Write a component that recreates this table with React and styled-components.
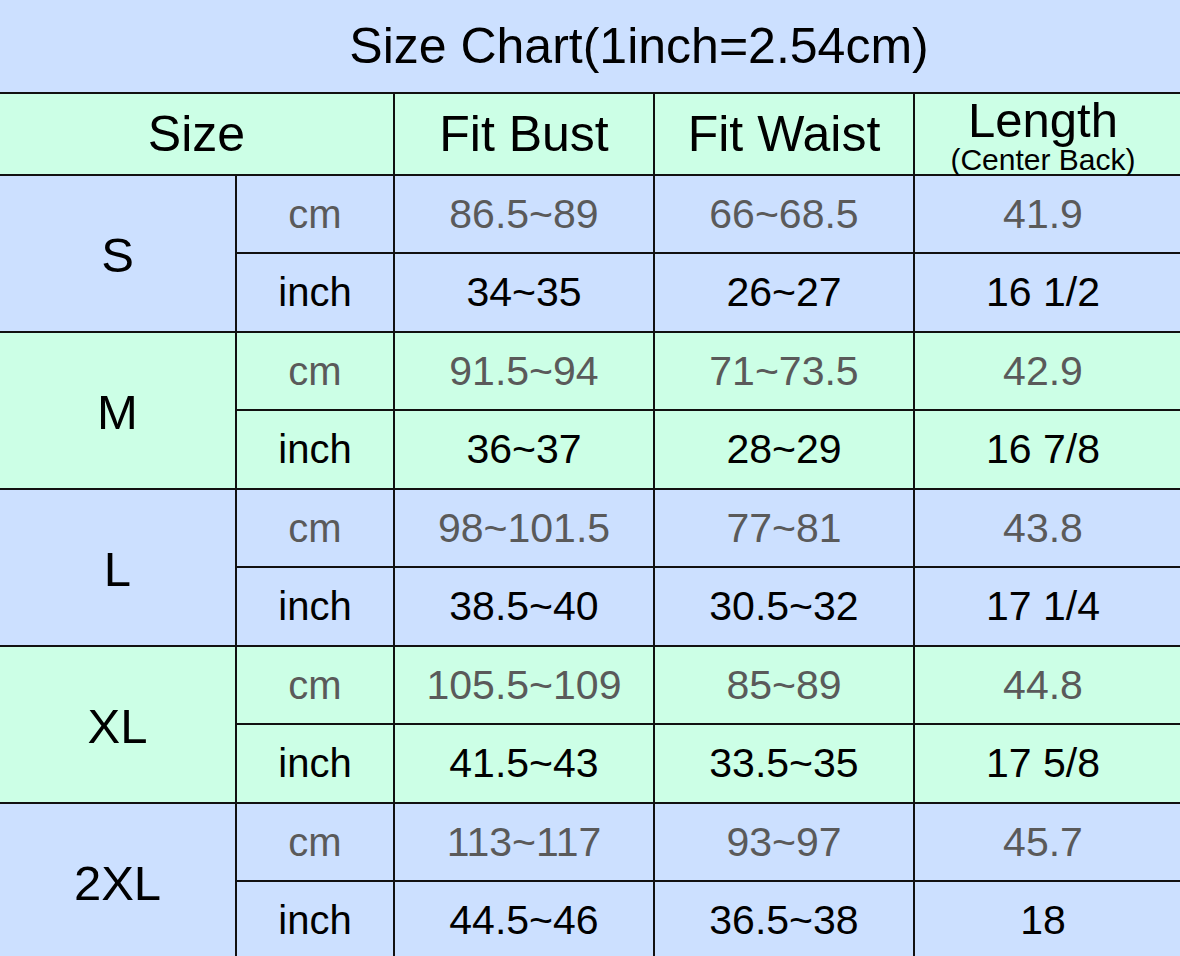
import React from 'react'
import styled, { createGlobalStyle } from 'styled-components'

const GlobalStyle = createGlobalStyle`
  html, body {
    margin: 0;
    padding: 0;
    overflow: hidden;
    background: #cce0ff;
  }
  body {
    font-family: "Liberation Sans", Arial, sans-serif;
  }
`

const colors = {
  blue: '#cce0ff',
  green: '#ccffe6',
  line: '#111111',
  gray: '#5a5a5a',
  ink: '#000000',
}

const Page = styled.div`
  width: 1180px;
  background: ${colors.blue};
`

const Title = styled.div`
  height: 92px;
  display: flex;
  align-items: center;
  justify-content: center;
  padding-left: 98px;
  font-size: 50px;
  color: ${colors.ink};
`

const Table = styled.div`
  display: grid;
  grid-template-columns: 235px 156px 258px 258px 1fr;
  grid-template-rows: 80px repeat(5, 76px 77px);
  gap: 2px;
  background: ${colors.line};
  border-top: 2px solid ${colors.line};
`

const Cell = styled.div`
  display: flex;
  align-items: center;
  justify-content: center;
  background: ${p => p.$bg};
  color: ${p => (p.$muted ? colors.gray : colors.ink)};
  font-size: ${p => p.$fs || 41}px;
  padding-right: ${p => (p.$last ? 9 : 0)}px;
  white-space: nowrap;
`

const HeadCell = styled(Cell)`
  font-size: 50px;
  grid-column: ${p => (p.$wide ? 'span 2' : 'auto')};
`

const StackHead = styled(HeadCell)`
  flex-direction: column;
  line-height: 1;
  padding-top: 2px;

  span {
    font-size: 49px;
  }

  small {
    font-size: 30px;
  }
`

const SizeLabel = styled(Cell)`
  grid-row: span 2;
  font-size: 49px;
  padding-top: 2px;
`

const rows = [
  { size: 'S', cm: ['86.5~89', '66~68.5', '41.9'], inch: ['34~35', '26~27', '16 1/2'] },
  { size: 'M', cm: ['91.5~94', '71~73.5', '42.9'], inch: ['36~37', '28~29', '16 7/8'] },
  { size: 'L', cm: ['98~101.5', '77~81', '43.8'], inch: ['38.5~40', '30.5~32', '17 1/4'] },
  { size: 'XL', cm: ['105.5~109', '85~89', '44.8'], inch: ['41.5~43', '33.5~35', '17 5/8'] },
  { size: '2XL', cm: ['113~117', '93~97', '45.7'], inch: ['44.5~46', '36.5~38', '18'] },
]

const App = () => {
  return (
    <Page>
      <GlobalStyle />
      <Title>Size Chart(1inch=2.54cm)</Title>
      <Table>
        <HeadCell $bg={colors.green} $wide>Size</HeadCell>
        <HeadCell $bg={colors.green}>Fit Bust</HeadCell>
        <HeadCell $bg={colors.green}>Fit Waist</HeadCell>
        <StackHead $bg={colors.green} $last>
          <span>Length</span>
          <small>(Center Back)</small>
        </StackHead>

        {rows.map((r, i) => {
          const bg = i % 2 === 0 ? colors.blue : colors.green
          return (
            <React.Fragment key={r.size}>
              <SizeLabel $bg={bg}>{r.size}</SizeLabel>
              <Cell $bg={bg} $fs={40} $muted>cm</Cell>
              {r.cm.map((v, j) => (
                <Cell key={'c' + j} $bg={bg} $muted $last={j === 2}>{v}</Cell>
              ))}
              <Cell $bg={bg} $fs={40}>inch</Cell>
              {r.inch.map((v, j) => (
                <Cell key={'i' + j} $bg={bg} $last={j === 2}>{v}</Cell>
              ))}
            </React.Fragment>
          )
        })}
      </Table>
    </Page>
  )
}

export default App
